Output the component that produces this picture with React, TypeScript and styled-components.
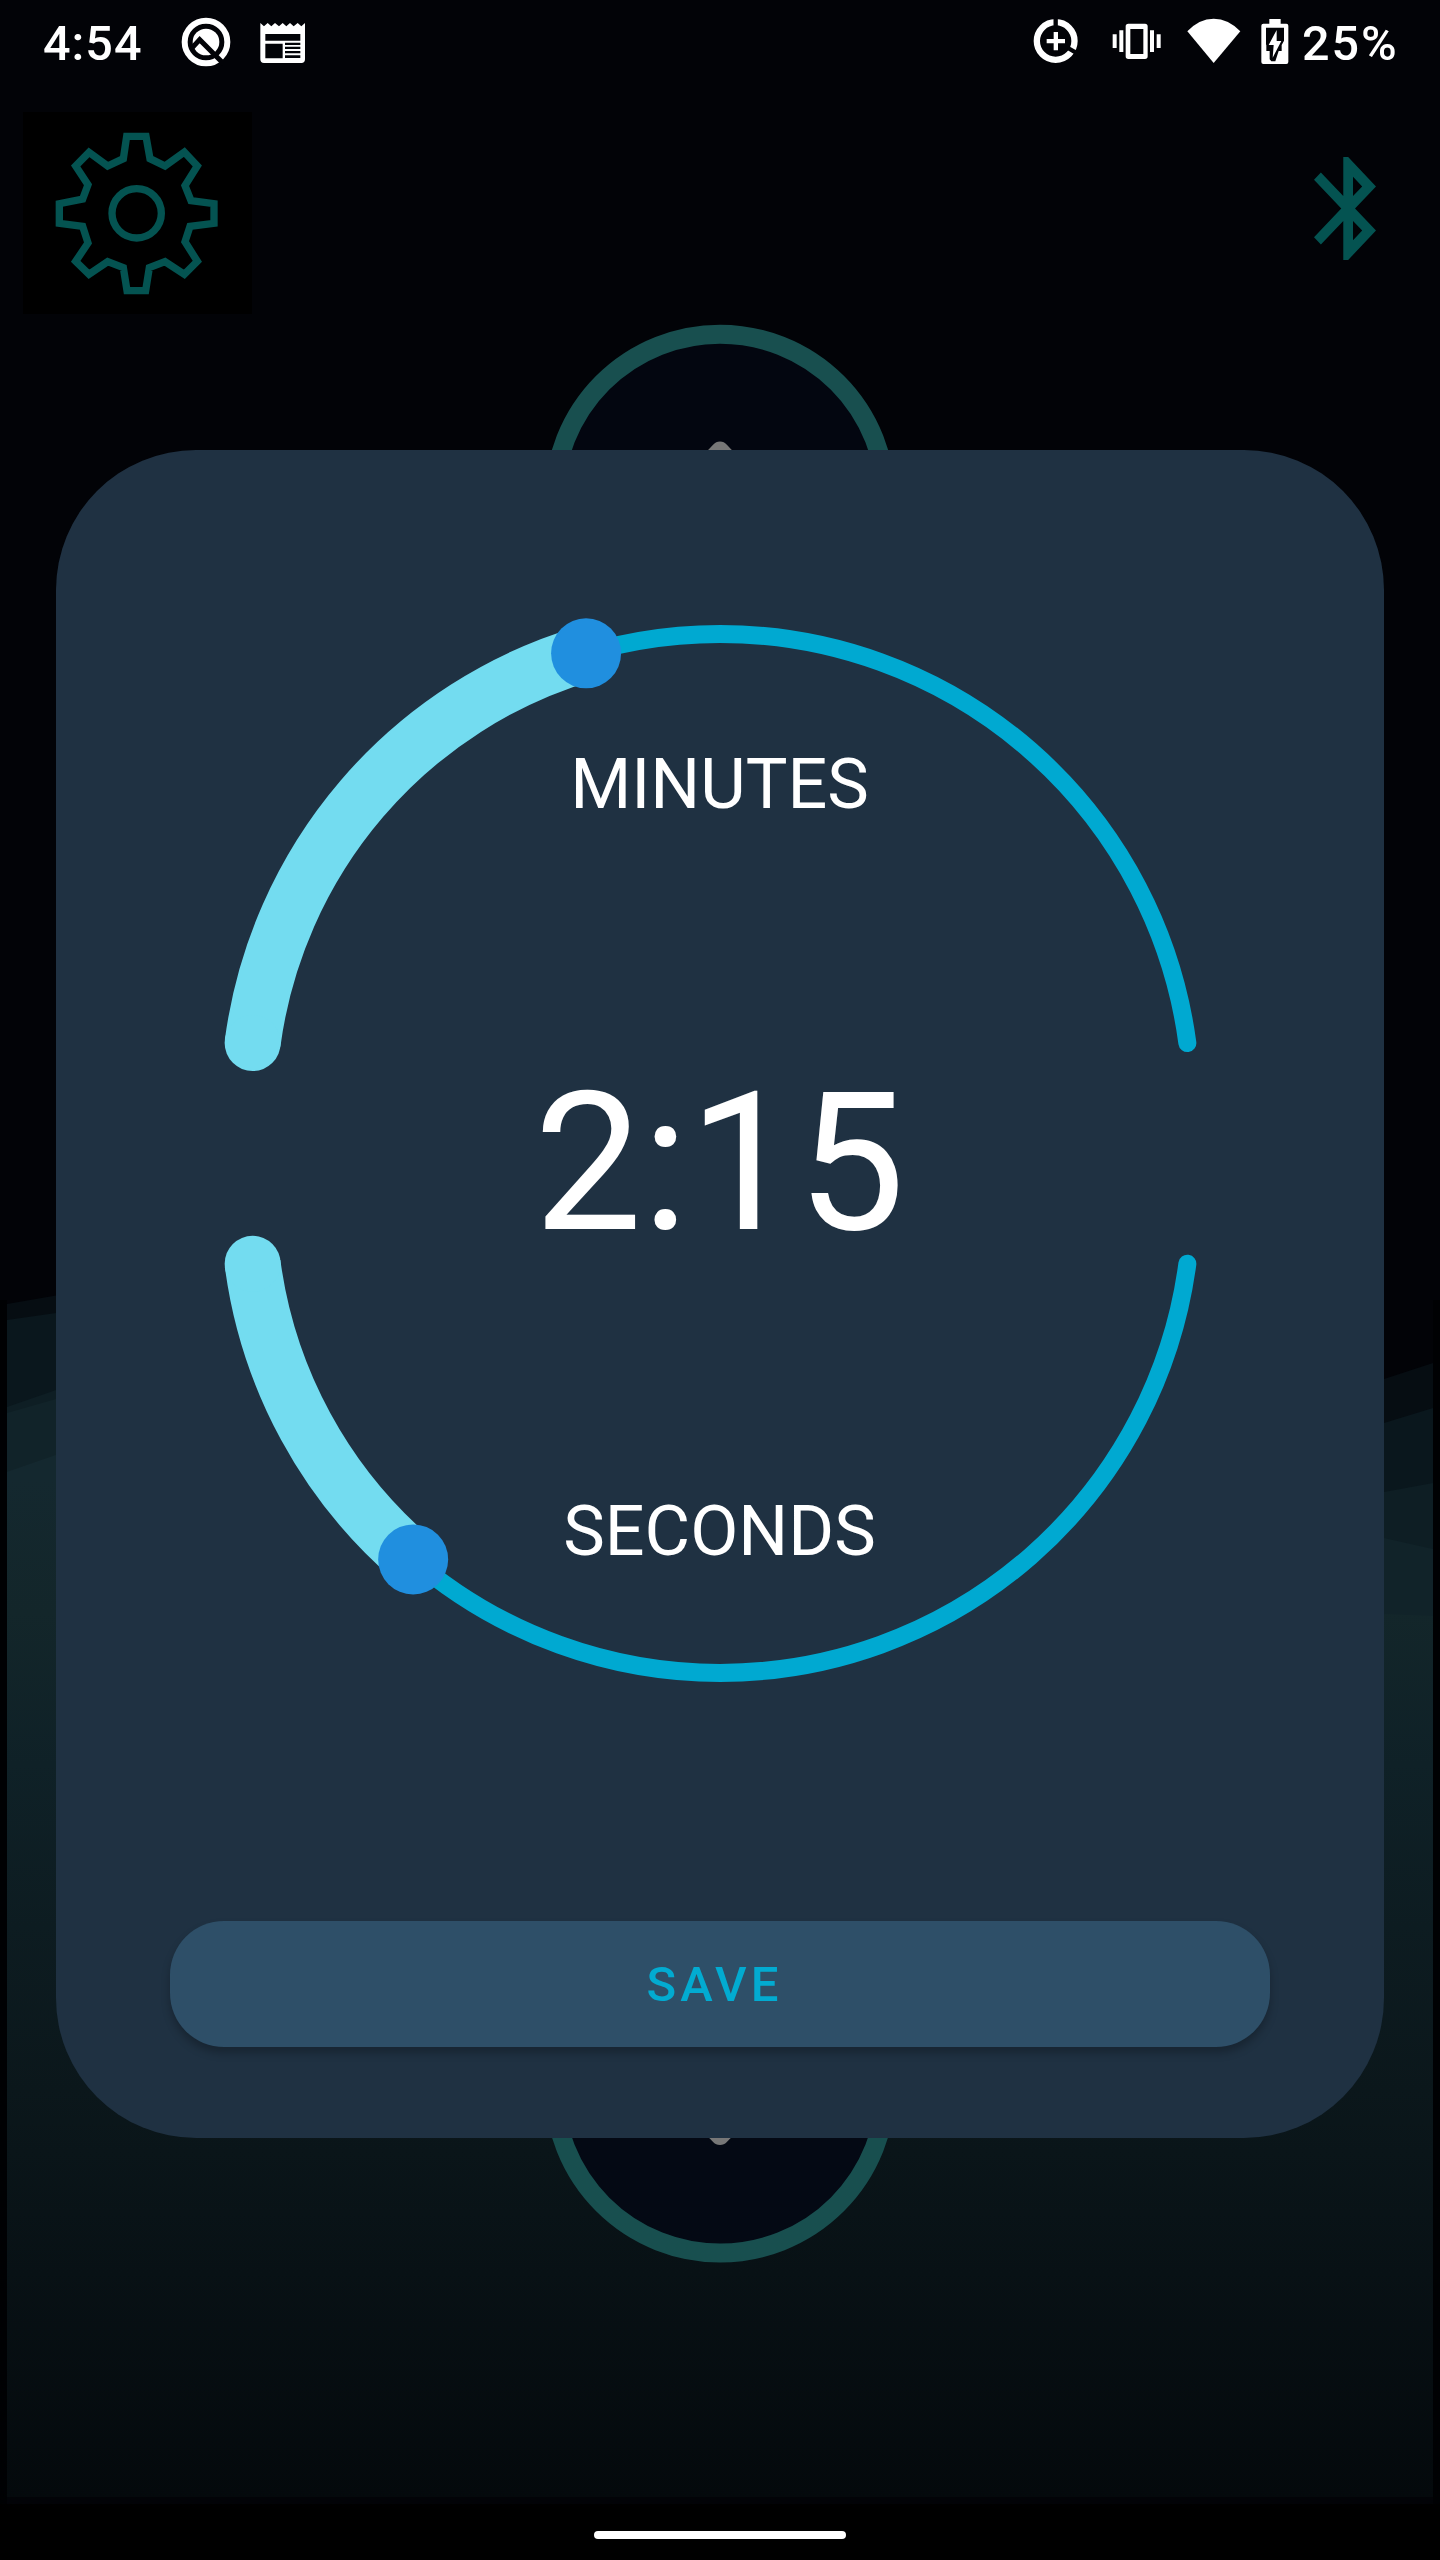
import React from "react";
import styled, { createGlobalStyle } from "styled-components";

const GlobalStyle = createGlobalStyle`
  body { margin: 0; background: #000; }
  * { box-sizing: border-box; }
  svg { display: block; flex: none; }
`;

const Screen = styled.div`
  position: relative;
  width: 1440px;
  height: 2560px;
  overflow: hidden;
  display: flex;
  flex-direction: column;
  background: #020307;
  color: #fff;
  font-family: Roboto, "Liberation Sans", sans-serif;
`;

const Backdrop = styled.svg`
  position: absolute;
  inset: 0;
`;

const StatusBar = styled.header`
  position: relative;
  display: flex;
  align-items: center;
  height: 88px;
  padding: 0 39px 0 43px;
`;

const StatusText = styled.span<{ $track?: number; $width: number }>`
  width: ${(p) => p.$width}px;
  white-space: nowrap;
  font-size: 48.5px;
  font-weight: 500;
  line-height: 88px;
  letter-spacing: ${(p) => p.$track ?? 0}px;
`;

const StatusGroup = styled.div<{ $end?: boolean }>`
  display: flex;
  align-items: center;
  height: 88px;
  margin-left: ${(p) => (p.$end ? "auto" : "0")};
`;

const LogoIcon = styled.svg`
  margin-top: -4px;
`;

const NewsIcon = styled.svg`
  margin: -3px 0 0 29px;
`;

const SystemIcons = styled.svg`
  margin: -4px 13px 0 0;
`;

const AppBar = styled.nav`
  position: relative;
  display: flex;
  justify-content: space-between;
  align-items: flex-start;
  height: 362px;
  padding: 24px 64px 0 23px;
`;

const IconButton = styled.button<{ $fill?: string; $top?: number }>`
  border: 0;
  padding: 0;
  margin-top: ${(p) => p.$top ?? 0}px;
  background: ${(p) => p.$fill ?? "transparent"};
  color: #045351;
`;

const Dialog = styled.section`
  position: relative;
  align-self: center;
  display: flex;
  flex-direction: column;
  align-items: center;
  width: 1328px;
  height: 1688px;
  border-radius: 140px;
  background: #1f3142;
`;

const Dial = styled.div`
  display: grid;
  width: 1328px;
  height: 1471px;
  > * { grid-area: 1 / 1; }
`;

const Readout = styled.div`
  position: relative;
  display: flex;
  flex-direction: column;
  align-items: center;
  padding: 293px 1px 0 0;
`;

const Label = styled.div`
  font-size: 70px;
  line-height: 82px;
`;

const Time = styled.div`
  margin: 223px 0 212px;
  font-size: 192.5px;
  line-height: 230px;
`;

const SaveButton = styled.button`
  width: 1100px;
  height: 126px;
  border: 0;
  padding: 2px 11px 0 0;
  border-radius: 54px;
  background: #2e4f68;
  color: #02abd1;
  box-shadow: 0 6px 9px rgba(0, 0, 0, 0.25);
  font: 500 49px/58px Roboto, "Liberation Sans", sans-serif;
  letter-spacing: 4.1px;
`;

const NavBar = styled.footer`
  position: relative;
  display: flex;
  justify-content: center;
  align-items: flex-start;
  height: 56px;
  margin-top: auto;
  padding-top: 27px;
  background: #000;
`;

const NavHandle = styled.div`
  width: 252px;
  height: 8px;
  border-radius: 4px;
  background: #fff;
`;

const R = 471.5;
const CX = 720;
const TRACK = "#00a9d1";
const FILL = "#73dcf0";
const THUMB = "#208fdf";

type SliderProps = {
  cy: number;
  /** degrees above (+) or below (-) the horizontal where the track begins */
  start: number;
  /** degrees above (+) or below (-) the horizontal where the thumb sits */
  value: number;
};

function pointAt(cy: number, degrees: number) {
  const a = (degrees * Math.PI) / 180;
  return { x: CX - R * Math.cos(a), y: cy - R * Math.sin(a) };
}

function Slider({ cy, start, value }: SliderProps) {
  const sweep = start > 0 ? 1 : 0;
  const from = pointAt(cy, start);
  const thumb = pointAt(cy, value);
  const arc = `M${from.x} ${from.y}A${R} ${R} 0 0 ${sweep}`;
  return (
    <g fill="none">
      <path d={`${arc} ${2 * CX - from.x} ${from.y}`} stroke={TRACK} strokeWidth="18" strokeLinecap="round" />
      <path d={`${arc} ${thumb.x} ${thumb.y}`} stroke={FILL} strokeWidth="56" />
      <circle cx={from.x} cy={from.y} r="28" fill={FILL} />
      <circle cx={thumb.x} cy={thumb.y} r="35" fill={THUMB} />
    </g>
  );
}

function Scenery() {
  return (
    <Backdrop width="1440" height="2560" viewBox="0 0 1440 2560">
      <defs>
        <linearGradient id="sea" gradientUnits="userSpaceOnUse" x1="0" y1="1480" x2="0" y2="2497">
          <stop offset="0" stopColor="#14282f" />
          <stop offset=".13" stopColor="#13262a" />
          <stop offset=".28" stopColor="#0f2127" />
          <stop offset=".6" stopColor="#0b171b" />
          <stop offset=".78" stopColor="#081115" />
          <stop offset="1" stopColor="#04090c" />
        </linearGradient>
      </defs>
      <path d="M0 1300h7v1204H0zM1433 1300h7v1204h-7z" fill="#000103" />
      <path d="M7 1304L56 1295.5C500 1230 900 1520 1384 1379L1433 1363V2497H7z" fill="#060d12" />
      <path d="M7 1320L56 1313C500 1260 900 1560 1384 1423L1433 1408V2497H7z" fill="#0a171d" />
      <path d="M7 1407L56 1390C500 1260 900 1560 1384 1492L1433 1483V2497H7z" fill="#0e1e24" />
      <path d="M7 1413L56 1399C500 1280 900 1430 1384 1538L1433 1549V2497H7z" fill="#112329" />
      <path d="M7 1472L56 1455C500 1320 900 1614 1384 1614L1433 1616V2497H7z" fill="url(#sea)" />
      <g fill="#030610" stroke="#184f4f" strokeWidth="19">
        <circle cx="720" cy="500.2" r="166" />
        <circle cx="720" cy="2087" r="166" fill="#040914" />
      </g>
      <g fill="#777">
        <path d="M706 452C713 446 714 441.5 720 441.5S727 446 734 452z" />
        <path d="M706 2135C713 2141 714 2145 720 2145S727 2141 734 2135z" />
      </g>
    </Backdrop>
  );
}

export default function App() {
  return (
    <>
      <GlobalStyle />
      <Screen>
        <Scenery />
        <StatusBar>
          <StatusText $track={1} $width={138}>4:54</StatusText>
          <StatusGroup>
            <LogoIcon width="50" height="50" viewBox="544 51 150 150">
              <circle cx="619" cy="126" r="64" fill="none" stroke="#fff" strokeWidth="18" />
              <circle cx="619" cy="126" r="40" fill="#fff" />
              <path d="M576 145L600 119L672 191" fill="none" stroke="#020307" strokeWidth="15" />
            </LogoIcon>
            <NewsIcon width="46" height="42" viewBox="782 64 138 126">
              <path
                fill="#fff"
                fillRule="evenodd"
                d="M783 67l11 10 11-10 11 10 11-10 12 10 11-10 11 10 11-10 11 10 12-10 11 10 11-10V176q0 11-11 11H794q-11 0-11-11zM798 100v20h105v-20zM798 129v44h52v-44zM857 126v7h46v-7zM857 138v7h46v-7zM857 151v7h46v-7zM857 164v8h46v-8z"
              />
            </NewsIcon>
          </StatusGroup>
          <StatusGroup $end>
            <SystemIcons width="256" height="50" viewBox="98 52 768 150" fill="#fff">
              <circle cx="166" cy="124" r="56.5" fill="none" stroke="#fff" strokeWidth="19" />
              <path d="M166 84V52M203 145l34 20" stroke="#020307" strokeWidth="13" />
              <path d="M160 97h13v21h21v13h-21v21h-13v-21h-21v-13h21z" />
              <path
                fillRule="evenodd"
                d="M384 72h50q8 0 8 8v90q0 8-8 8h-50q-8 0-8-8V80q0-8 8-8zM390 88v75h39V88zM357 92h12v65h-12zM337 104h12v41h-12zM449 92h12v65h-12zM469 104h12v41h-12z"
              />
              <path d="M561 95Q596 57 640 57T720 95L640 190z" />
              <path d="M807 58h34v14h17q6 0 6 6v109q0 6-6 6h-69q-6 0-6-6V78q0-6 6-6h18z" />
              <path d="M797 84h54v39l-7 13v18h-9l-10 31h-12l-5-6v-25h-10v-17l-1-3z" fill="#020307" />
              <path d="M829 91L805 136h15l-3 38 26-50h-14z" />
            </SystemIcons>
            <StatusText $track={1.9} $width={99}>25%</StatusText>
          </StatusGroup>
        </StatusBar>
        <AppBar>
          <IconButton $fill="#000" aria-label="Settings">
            <svg width="229" height="202" viewBox="69 66 687 606" fill="none" stroke="currentColor" strokeWidth="22">
              <path d="M380 139H438L450 206L495 228L553 186L592 228L555 287L573 332L642 341V400L570 409L555 455L592 514L553 553L495 515L448 533L437 602H381L370 533L323 515L267 553L227 514L264 459L248 409L178 400V341L248 327L264 284L227 228L267 187L323 228L370 206Z" />
              <circle cx="410" cy="370" r="74" />
            </svg>
          </IconButton>
          <IconButton $top={45} aria-label="Bluetooth">
            <svg width="62" height="103" viewBox="5 2 12.71 20" preserveAspectRatio="none" fill="currentColor">
              <path d="M17.71 7.71L12 2h-1v7.59L6.41 5 5 6.41 10.59 12 5 17.59 6.41 19 11 14.41V22h1l5.71-5.71-4.3-4.29 4.3-4.29zM13 5.83l1.88 1.88L13 9.59V5.83zm1.88 10.46L13 18.17v-3.76l1.88 1.88z" />
            </svg>
          </IconButton>
        </AppBar>
        <Dialog>
          <Dial>
            <svg width="1328" height="1471" viewBox="56 450 1328 1471">
              <Slider cy={1105.4} start={7.6} value={73.5} />
              <Slider cy={1201.4} start={-7.6} value={-49.4} />
            </svg>
            <Readout>
              <Label>MINUTES</Label>
              <Time>2:15</Time>
              <Label>SECONDS</Label>
            </Readout>
          </Dial>
          <SaveButton>SAVE</SaveButton>
        </Dialog>
        <NavBar>
          <NavHandle />
        </NavBar>
      </Screen>
    </>
  );
}
